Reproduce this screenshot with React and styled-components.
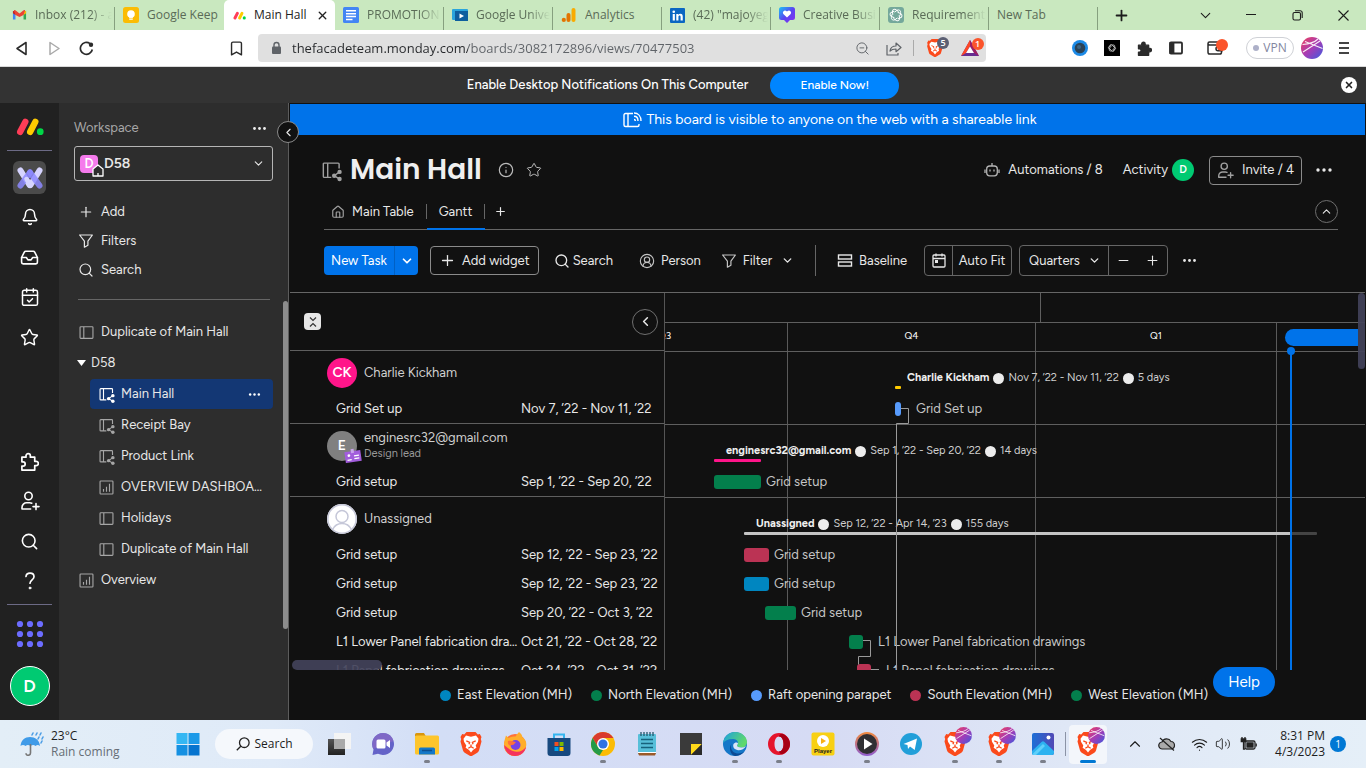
import React from "react";
import styled, { createGlobalStyle, css } from "styled-components";
import {
  Bell, Inbox, CalendarCheck, Star, Search, Plus, Minus, ChevronDown, ChevronLeft, ChevronUp,
  Info, House, CircleUserRound, Bookmark, ZoomOut, X, Wifi, Volume2,
} from "lucide-react";

const UI = `Figtree, Inter, "Liberation Sans", sans-serif`;
const SYS = `"Segoe UI", "Open Sans", "Noto Sans", sans-serif`;

const Global = createGlobalStyle`
  *, *::before, *::after { box-sizing: border-box; }
  html, body { margin: 0; height: 100%; background: #111; }
  body { font-family: ${UI}; font-size: 13px; line-height: 16px; color: #e8e8e8; }
  button, input, select { font: inherit; color: inherit; margin: 0; }
  button { background: none; border: 0; padding: 0; cursor: pointer; }
  a { color: inherit; text-decoration: none; }
  svg { display: block; flex: none; }
`;

const Screen = styled.div`
  display: flex;
  flex-direction: column;
  height: 100vh;
  overflow: hidden;
`;

/* ---------- shared ---------- */

const List = styled.ul`
  list-style: none;
  margin: 0;
  padding: 0;
`;

const IconButton = styled.button`
  display: flex;
  align-items: center;
  justify-content: center;
  flex: none;
  width: ${(p) => p.$w || 32}px;
  height: ${(p) => p.$h || p.$w || 32}px;
  color: ${(p) => p.$color || "inherit"};
`;

const RoundButton = styled(IconButton)`
  border: 1px solid #6f6f6f;
  border-radius: 50%;
`;

const Avatar = styled.span`
  position: relative;
  display: flex;
  align-items: center;
  justify-content: center;
  flex: none;
  width: ${(p) => p.$size}px;
  height: ${(p) => p.$size}px;
  border-radius: 50%;
  background: ${(p) => p.$bg};
  border: ${(p) => (p.$ring ? "1px solid #fff" : "0")};
  color: #fff;
  font-size: ${(p) => p.$font || 14}px;
  font-weight: 600;
`;

const Dots = ({ size = 18 }) => (
  <svg width={size} height={size} viewBox="0 0 18 18" fill="currentColor" aria-hidden="true">
    <circle cx="3" cy="9" r="1.7" /><circle cx="9" cy="9" r="1.7" /><circle cx="15" cy="9" r="1.7" />
  </svg>
);

const BoardIcon = ({ size = 16, shared = false }) => (
  <svg width={size} height={size} viewBox="0 0 20 20" fill="none" stroke="currentColor" strokeWidth="1.5" overflow="visible" aria-hidden="true">
    {shared ? (
      <>
        <path d="M18 8V3.2a1 1 0 0 0-1-1H2.4a1 1 0 0 0-1 1v13a1 1 0 0 0 1 1h7.4" />
        <path d="M6 2.4v14.800" />
        <g fill="currentColor" stroke="none">
          <circle cx="18.500" cy="11.500" r="2.300" /><circle cx="12.800" cy="15.500" r="2.300" /><circle cx="18.500" cy="19" r="2.300" />
        </g>
        <path d="m12.800 15.500 5.700-4M12.800 15.500l5.700 3.500" />
      </>
    ) : (
      <>
        <rect x="1.4" y="2.4" width="17.2" height="15.4" rx="1" />
        <path d="M6.4 2.6v15" />
      </>
    )}
  </svg>
);

const ChartIcon = () => (
  <svg width="15" height="15" viewBox="0 0 20 20" fill="none" stroke="currentColor" strokeWidth="1.5" aria-hidden="true">
    <rect x="1.4" y="1.4" width="17.2" height="17.2" rx="1" />
    <path d="M6 15.500V12M10 15.500V9M14 15.500V5" />
  </svg>
);

const FunnelIcon = ({ size = 16 }) => (
  <svg width={size} height={size} viewBox="0 0 20 20" fill="none" stroke="currentColor" strokeWidth="1.5" strokeLinejoin="round" aria-hidden="true">
    <path d="M2 2.500h16l-5.600 7.600v5.100L8 17.700v-7.600z" />
  </svg>
);

const PuzzleIcon = ({ size = 18, solid = false }) => (
  <svg width={size} height={size} viewBox="0 0 20 20" fill={solid ? "currentColor" : "none"} stroke="currentColor" strokeWidth="1.800" strokeLinejoin="round" aria-hidden="true">
    <path d="M2 5.500h4.300V4a2.300 2.300 0 0 1 4.600 0v1.500h4.600v4.300H17a2.300 2.300 0 0 1 0 4.600h-1.500V19H2v-4.200h1.200a2.200 2.200 0 0 0 0-4.500H2z" />
  </svg>
);

const PersonPlus = ({ size = 20 }) => (
  <svg width={size} height={size} viewBox="0 0 20 20" fill="none" stroke="currentColor" strokeWidth="1.600" strokeLinecap="round" strokeLinejoin="round" aria-hidden="true">
    <circle cx="8.500" cy="5" r="3.700" />
    <path d="M10.600 18H2v-1.600c0-2.800 2.200-4.600 4.600-4.600h3.200c.8 0 1.400.1 2 .4M16 12.600v6M13 15.600h6" />
  </svg>
);

const MondayLogo = ({ width = 28, height = 19 }) => (
  <svg width={width} height={height} viewBox="0 0 30 20" strokeWidth="6.800" strokeLinecap="round" aria-hidden="true">
    <path d="M4.500 15.700 10 5" stroke="#ff3d57" />
    <path d="M15.200 15.700 20.700 5" stroke="#ffcb00" />
    <circle cx="26" cy="15.500" r="3.600" fill="#00d647" />
  </svg>
);

/* ---------- browser chrome ---------- */

const TabStrip = styled.div`
  display: flex;
  flex: none;
  height: 30px;
  background: #c9e8bf;
  font-family: ${SYS};
  font-size: 12px;
  color: #5a6b57;
`;

const TabList = styled.nav`
  display: flex;
  min-width: 0;
`;

const BrowserTab = styled.a`
  position: relative;
  display: flex;
  align-items: center;
  gap: 8px;
  min-width: 0;
  flex: 0 1 ${(p) => p.$w || 109}px;
  width: ${(p) => p.$w || 109}px;
  padding: 0 ${(p) => (p.$active ? 6 : 3)}px 0 ${(p) => p.$pad || 8}px;
  ${(p) =>
    p.$active
      ? css`
          background: #fff;
          color: #222;
          border-radius: 5px 5px 0 0;
        `
      : css`
          &::after {
            content: "";
            position: absolute;
            right: 0;
            top: 7px;
            bottom: 0;
            width: ${p.$noLine ? 0 : 1}px;
            background: #86a07f;
          }
        `}
`;

const TabLabel = styled.span`
  flex: 1;
  min-width: 0;
  overflow: hidden;
  white-space: nowrap;
  ${(p) => p.$fade && "mask-image: linear-gradient(90deg, #000 calc(100% - 22px), transparent);"}
`;

const WindowControls = styled.div`
  display: flex;
  margin-left: auto;
  color: #1c1c1c;
`;

const AddressRow = styled.div`
  display: flex;
  align-items: center;
  flex: none;
  height: 37px;
  background: #fff;
  border-bottom: 1px solid #d9d9d9;
  color: #2b2b2b;
  font-family: ${SYS};
`;

const NavButtons = styled.div`
  display: flex;
  flex: none;
  width: 258px;
  padding: 0 6px;
  & > :last-child { margin-left: auto; }
`;

const AddressBar = styled.div`
  display: flex;
  align-items: center;
  flex: 1;
  min-width: 0;
  height: 28px;
  padding-left: 12px;
  border-radius: 4px;
  background: #e0e0e0;
  color: #5f6368;
`;

const AddressInput = styled.input`
  flex: 1;
  min-width: 0;
  height: 28px;
  margin-left: 9px;
  padding: 0;
  border: 0;
  outline: 0;
  background: linear-gradient(90deg, #26282b 176px, #5f6368 176px);
  background-clip: text;
  -webkit-text-fill-color: transparent;
`;

const BarRule = styled.span`
  width: 1px;
  height: 16px;
  margin: 0 3px;
  background: #aaa;
`;

const Extensions = styled.div`
  display: flex;
  align-items: center;
  justify-content: flex-end;
  flex: none;
  width: 380px;
  padding-right: 8px;
`;

const VpnButton = styled.button`
  display: flex;
  align-items: center;
  justify-content: center;
  gap: 4px;
  width: 48px;
  height: 22px;
  margin-left: 8px;
  border: 1px solid #cfd1d6;
  border-radius: 11px;
  font-size: 12px;
  color: #8286a0;
  &::before { content: ""; width: 6px; height: 6px; border-radius: 50%; background: #adb0c8; }
`;

const Gmail = () => (
  <svg width="15" height="16" viewBox="0 0 16 16"><path d="M1 3.500v9.300h2.700V6z" fill="#4285f4" /><path d="M15 3.500v9.300h-2.700V6z" fill="#34a853" /><path d="M1 3.600 3.700 4v4L1 6z" fill="#c5221f" /><path d="M12.300 4 15 3.600V6l-2.700 2z" fill="#fbbc04" /><path d="M2 3c1-.6 1.600 0 2 .3l4 3.100 4-3.100c.4-.3 1.200-.9 2-.3l-1.700 5L8 10.200 3.700 8z" fill="#ea4335" /></svg>
);
const Keep = () => (
  <svg width="16" height="16" viewBox="0 0 16 16"><rect width="16" height="16" rx="2.500" fill="#fbbc04" /><circle cx="8" cy="7" r="3.800" fill="#fff" /><path d="M6 9h4v1.800H6zM6.200 11.600h3.600v1.200H6.200z" fill="#fff" /></svg>
);
const Docs = () => (
  <svg width="16" height="16" viewBox="0 0 16 16"><rect width="16" height="16" rx="1.500" fill="#4285f4" /><path d="M3 3.800h10M3 6.700h10M3 9.600h10M3 12.400h6.500" stroke="#fff" strokeWidth="1.500" /></svg>
);
const Course = () => (
  <svg width="16" height="16" viewBox="0 0 16 16"><rect y="2" width="16" height="11" rx="1" fill="#2aa5dc" /><rect x="3" y="4" width="13" height="10" fill="#0e5f9e" /><path d="m7.500 6.500 4.500 2.500-4.500 2.500z" fill="#fff" /></svg>
);
const Analytics = () => (
  <svg width="16" height="16" viewBox="0 0 16 16"><rect x="10.500" y="1" width="4" height="14" rx="2" fill="#f9ab00" /><rect x="5.500" y="6" width="4" height="9" rx="2" fill="#e37400" /><circle cx="2.800" cy="12.900" r="2.100" fill="#e37400" /></svg>
);
const LinkedIn = () => (
  <svg width="15" height="15" viewBox="0 0 16 16"><rect width="16" height="16" rx="1" fill="#0a66c2" /><circle cx="4" cy="4" r="1.400" fill="#fff" /><path d="M2.900 6.400h2.300v7H2.900zM6.700 6.400h2.200v1c.5-.8 1.200-1.200 2.200-1.200 1.900 0 2.500 1.200 2.500 3v4.200h-2.300V9.700c0-.9-.2-1.600-1.100-1.600-.9 0-1.200.7-1.200 1.600v3.700H6.700z" fill="#fff" /></svg>
);
const Creative = () => (
  <svg width="16" height="16" viewBox="0 0 16 16"><defs><linearGradient id="cb" x1="0" y1="0" x2="1" y2="1"><stop offset="0" stopColor="#18c5f5" /><stop offset=".5" stopColor="#5a45f0" /><stop offset="1" stopColor="#8a2ff0" /></linearGradient></defs><path d="M2.500 0h11A2.500 2.500 0 0 1 16 2.500v8a2.500 2.500 0 0 1-2.500 2.500H11l-3 3-3-3H2.500A2.500 2.500 0 0 1 0 10.500v-8A2.500 2.500 0 0 1 2.500 0z" fill="url(#cb)" /><path d="M8 10.500 4.300 7a2.200 2.200 0 0 1 3-3.100l.7.600.7-.6a2.200 2.200 0 0 1 3 3.100z" fill="#fff" /></svg>
);
const Knot = ({ bg = "#74a89b", rx = 3, s = 1 }) => (
  <svg width="16" height="16" viewBox="0 0 16 16"><rect width="16" height="16" rx={rx} fill={bg} /><g transform={`translate(8 8) scale(${s})`} fill="none" stroke="#fff" strokeWidth="1">{[0, 60, 120, 180, 240, 300].map((a) => <path key={a} transform={`rotate(${a})`} d="M-1.500-2.800 1.200-4.800c1.800-1 3.800.4 3.400 2.400L4.200.5" />)}</g></svg>
);

const BraveLion = ({ size = 24 }) => (
  <svg width={size} height={size} viewBox="0 0 24 24">
    <path d="M7.500 0h9l2.300 2.400 2-.3L22.500 5l-.7 2 .7 2.500-2.500 9c-.3 1-.9 1.700-1.700 2.300L12 24.500l-6.300-3.700c-.8-.6-1.400-1.300-1.700-2.300l-2.500-9 .7-2.500-.7-2 1.700-2.900 2 .3z" fill="#fb4a1c" />
    <path d="M9 4l3 .7L15 4l2-.5 2.500 3.200-.5 3-2.300 3.700.7 2.300-2 1.400-1.400 1-2 2.400-2-2.400-1.400-1-2-1.400.7-2.300L5 9.700l-.5-3L7 3.500z" fill="#fff" />
    <path d="m7.300 8.800 3.300 1.500-.6 2M16.700 8.800l-3.300 1.500.6 2M12 12.500v2M9.300 16.200l2.700-1.500 2.700 1.500" stroke="#fb4a1c" strokeWidth="1.300" fill="none" />
  </svg>
);

const ProfileOrb = ({ size = 22, id }) => (
  <svg width={size} height={size} viewBox="0 0 22 22">
    <defs><linearGradient id={id} x1="0" y1="0" x2="1" y2="1"><stop offset="0" stopColor="#f0405a" /><stop offset=".5" stopColor="#a73bb5" /><stop offset="1" stopColor="#3b5be0" /></linearGradient></defs>
    <circle cx="11" cy="11" r="11" fill={`url(#${id})`} />
    <path d="M2 15 19 4M4 4.500 21.500 11.500M1.500 7.500C8 7 14 5 17 2" stroke="#fff" strokeWidth="1.100" fill="none" opacity=".9" />
  </svg>
);

const BadgeHolder = styled.span`
  position: relative;
  display: flex;
`;

const Badge = styled.span`
  position: absolute;
  top: -2px;
  right: -5px;
  width: 12px;
  height: 12px;
  border-radius: 50%;
  background: ${(p) => p.$bg};
  color: #fff;
  font-size: 9px;
  font-weight: 600;
  line-height: 12px;
  text-align: center;
`;

const tabs = [
  { label: "Inbox (212) - a", icon: <Gmail />, w: 115, pad: 12, fade: true },
  { label: "Google Keep", icon: <Keep />, noLine: true },
  { label: "Main Hall", icon: <MondayLogo width={13} height={9} />, w: 111, pad: 9, active: true },
  { label: "PROMOTION", icon: <Docs />, fade: true },
  { label: "Google Univer", icon: <Course />, fade: true },
  { label: "Analytics", icon: <Analytics /> },
  { label: '(42) "majoyeg', icon: <LinkedIn />, fade: true },
  { label: "Creative Busin", icon: <Creative />, fade: true },
  { label: "Requirements", icon: <Knot />, fade: true },
  { label: "New Tab" },
];

function BrowserChrome() {
  return (
    <>
      <TabStrip>
        <TabList aria-label="Browser tabs">
          {tabs.map((t) => (
            <BrowserTab key={t.label} href="#" $w={t.w} $pad={t.pad} $active={t.active} $noLine={t.noLine}>
              {t.icon}
              <TabLabel $fade={t.fade}>{t.label}</TabLabel>
              {t.active && <X size={13} strokeWidth={2.5} />}
            </BrowserTab>
          ))}
        </TabList>
        <IconButton $w={46} $h={30} $color="#1c1c1c" aria-label="New tab"><Plus size={17} strokeWidth={2.5} /></IconButton>
        <WindowControls>
          <IconButton $w={46} $h={30} aria-label="Tab search"><ChevronDown size={17} strokeWidth={1.5} /></IconButton>
          <IconButton $w={46} $h={30} aria-label="Minimise"><svg width="10" height="10"><path d="M0 4.500h10" stroke="currentColor" /></svg></IconButton>
          <IconButton $w={46} $h={30} aria-label="Restore"><svg width="11" height="11" fill="none" stroke="currentColor" strokeWidth="1.100"><rect x="1" y="2.500" width="7.500" height="7.500" rx="1.500" /><path d="M3 .800h5.200a2 2 0 0 1 2 2V8" /></svg></IconButton>
          <IconButton $w={46} $h={30} aria-label="Close"><svg width="11" height="11"><path d="m.5.5 10 10m0-10-10 10" stroke="currentColor" strokeWidth="1.100" /></svg></IconButton>
        </WindowControls>
      </TabStrip>
      <AddressRow>
        <NavButtons>
          <IconButton aria-label="Back"><svg width="14" height="15" viewBox="0 0 14 15" fill="none" stroke="currentColor" strokeWidth="1.600" strokeLinejoin="round"><path d="M11 1.500v12L2 7.500z" /></svg></IconButton>
          <IconButton $color="#aaa" aria-label="Forward"><svg width="14" height="15" viewBox="0 0 14 15" fill="none" stroke="currentColor" strokeWidth="1.500" strokeLinejoin="round"><path d="M3 1.500v12l9-6z" /></svg></IconButton>
          <IconButton aria-label="Reload"><svg width="15" height="15" viewBox="0 0 15 15" fill="none" stroke="currentColor" strokeWidth="1.700"><path d="M13.300 8.500A6 6 0 1 1 11 2.600" /><circle cx="12" cy="3.800" r="2.200" fill="currentColor" stroke="none" /></svg></IconButton>
          <IconButton aria-label="Bookmark"><Bookmark size={17} strokeWidth={2} /></IconButton>
        </NavButtons>
        <AddressBar>
          <svg width="13" height="14" viewBox="0 0 13 14" aria-hidden="true"><rect x="2" y="5.500" width="9" height="7.500" rx="1" fill="#5f6368" /><path d="M4 6V4a2.500 2.500 0 0 1 5 0v2" fill="none" stroke="#5f6368" strokeWidth="1.400" /></svg>
          <AddressInput aria-label="Address" readOnly value="thefacadeteam.monday.com/boards/3082172896/views/70477503" />
          <IconButton aria-label="Zoom"><ZoomOut size={15} strokeWidth={1.5} /></IconButton>
          <IconButton aria-label="Share"><svg width="16" height="15" viewBox="0 0 16 15" fill="none" stroke="currentColor" strokeWidth="1.200" strokeLinejoin="round"><path d="M1 4v10h11v-2M4 10c.5-3.500 2.800-5 6-5V2l5 4.500-5 4.200V8c-3 0-4.500.5-6 2z" /></svg></IconButton>
          <BarRule />
          <IconButton $w={36} $h={28} aria-label="Shields"><BadgeHolder><BraveLion size={18} /><Badge $bg="#5b5f73">5</Badge></BadgeHolder></IconButton>
          <IconButton $w={33} $h={28} aria-label="Rewards"><BadgeHolder><svg width="18" height="16" viewBox="0 0 18 16"><path d="M9 0 0 16h18z" fill="#662d91" /><path d="M9 0 0 16l5-3 4-7z" fill="#ff4724" /><path d="M9 0v6l4 7 5 3z" fill="#9e1f63" /><path d="m9 6.500 4 6.500H5z" fill="#fff" /></svg><Badge $bg="#fb542b">1</Badge></BadgeHolder></IconButton>
        </AddressBar>
        <Extensions>
          <IconButton aria-label="Lens"><svg width="16" height="16" viewBox="0 0 16 16"><circle cx="8" cy="8" r="8" fill="#1c8ae6" /><circle cx="8" cy="8" r="5.300" fill="#2a4256" /><circle cx="7" cy="7" r="2" fill="#3d6481" /></svg></IconButton>
          <IconButton aria-label="Assistant"><Knot bg="#000" rx={0} s={0.6} /></IconButton>
          <IconButton aria-label="Extensions"><PuzzleIcon size={15} solid /></IconButton>
          <IconButton aria-label="Side panel"><svg width="14" height="14" viewBox="0 0 14 14" fill="none" stroke="currentColor" strokeWidth="1.800"><rect x="1" y="1.500" width="12" height="11" rx="1" /><path d="M1.500 2v10h3V2z" fill="currentColor" /></svg></IconButton>
          <IconButton $w={46} $h={28} aria-label="Wallet"><BadgeHolder><svg width="16" height="14" viewBox="0 0 16 14" fill="none" stroke="currentColor" strokeWidth="1.500"><path d="M14.500 5V4H2.500C.5 4 .5 1 2.500 1H12M1 2.500v8.700c0 1 .8 1.800 1.800 1.800h10c1 0 1.700-.8 1.700-1.800V10M15 5.800h-4a2 2 0 0 0 0 4h4z" /></svg><Badge $bg="#fb542b" /></BadgeHolder></IconButton>
          <VpnButton>VPN</VpnButton>
          <IconButton $w={36} $h={28} aria-label="Profile"><ProfileOrb id="orbMain" /></IconButton>
          <IconButton $w={28} $h={28} aria-label="Menu"><svg width="10" height="12"><path d="M0 1h10M0 6h10M0 11h10" stroke="#444" strokeWidth="1.800" /></svg></IconButton>
        </Extensions>
      </AddressRow>
    </>
  );
}

/* ---------- notice ---------- */

const Notice = styled.div`
  position: relative;
  display: flex;
  align-items: center;
  justify-content: center;
  gap: 22px;
  flex: none;
  height: 36px;
  background: #333;
  color: #fff;
  font-weight: 500;
`;

const NoticeButton = styled.button`
  width: 129px;
  height: 27px;
  border-radius: 14px;
  background: #0085ff;
  font-size: 12px;
`;

const NoticeClose = styled(IconButton)`
  position: absolute;
  right: 9px;
  border-radius: 50%;
  background: #fff;
`;

/* ---------- rail ---------- */

const Workspace = styled.div`
  display: flex;
  flex: 1;
  min-height: 0;
  background: #111;
`;

const Rail = styled.nav`
  display: flex;
  flex-direction: column;
  align-items: center;
  flex: none;
  width: 59px;
  padding: 14px 0 14px;
  background: #212121;
  color: #fff;
`;

const RailRule = styled.hr`
  width: 45px;
  height: 1px;
  margin: ${(p) => p.$m};
  border: 0;
  background: #6c6a85;
`;

const RailBottom = styled.div`
  display: flex;
  flex-direction: column;
  align-items: center;
  margin-top: auto;
`;

const ProductButton = styled.button`
  display: grid;
  place-items: center;
  width: 33px;
  height: 33px;
  margin-bottom: 3px;
  border-radius: 6px;
  background: #4b4b4b;
`;

const RailAvatar = styled(Avatar)`
  margin-top: 18px;
`;

function AppRail() {
  return (
    <Rail aria-label="Main">
      <a href="#" aria-label="Home"><MondayLogo /></a>
      <RailRule $m="14px 0 10px" />
      <ProductButton aria-label="Work management">
        <svg width="28" height="24" viewBox="0 0 28 24" strokeLinecap="round" strokeWidth="6" fill="none">
          <path d="M4.500 4.500 13.500 19" stroke="#d6d4ff" />
          <path d="M23.500 4.500 14.500 19" stroke="#d6d4ff" />
          <path d="M14 6.500 4.500 19.500" stroke="#8d8aff" opacity=".85" />
          <path d="M14 6.500 23.500 19.500" stroke="#8d8aff" opacity=".85" />
          <path d="M10.500 13 14 19" stroke="#d6d4ff" strokeWidth="4.500" />
        </svg>
      </ProductButton>
      <IconButton $w={40} aria-label="Notifications"><Bell size={18} strokeWidth={2} /></IconButton>
      <IconButton $w={40} aria-label="Inbox"><Inbox size={19} strokeWidth={2} /></IconButton>
      <IconButton $w={40} aria-label="My work"><CalendarCheck size={20} strokeWidth={1.8} /></IconButton>
      <IconButton $w={40} aria-label="Favorites"><Star size={19} strokeWidth={1.8} /></IconButton>
      <RailBottom>
        <IconButton $w={40} aria-label="Apps"><PuzzleIcon size={19} /></IconButton>
        <IconButton $w={40} aria-label="Invite members"><PersonPlus size={20} /></IconButton>
        <IconButton $w={40} aria-label="Search everything"><Search size={19} strokeWidth={2} /></IconButton>
        <IconButton $w={40} aria-label="Help"><svg width="12" height="18" viewBox="0 0 12 18" fill="none" stroke="currentColor" strokeWidth="1.700" strokeLinecap="round"><path d="M2 4.500C2.200 2.400 3.800 1.200 6 1.200s4 1.400 4 3.500c0 3-4 3.200-4 6.500" /><circle cx="6" cy="16" r="1" fill="currentColor" strokeWidth=".8" /></svg></IconButton>
        <RailRule $m="3px 0 15px" />
        <IconButton $w={28} aria-label="Products">
          <svg width="28" height="28" viewBox="0 0 28 28" fill="#6c6cff">
            {[4, 14, 24].map((y) => [4, 14, 24].map((x) => <circle key={`${x}${y}`} cx={x} cy={y} r="3.100" />))}
          </svg>
        </IconButton>
        <RailAvatar as="button" $size={40} $bg="#00ca72" $ring $font={18} aria-label="Account">D</RailAvatar>
      </RailBottom>
    </Rail>
  );
}

/* ---------- sidebar ---------- */

const Sidebar = styled.aside`
  position: relative;
  flex: none;
  width: 230px;
  padding: 12px 15px 0;
  background: #2d2d2d;
  border-right: 1px solid #5c5c5c;
`;

const SideHead = styled.div`
  display: flex;
  align-items: center;
  justify-content: space-between;
  height: 26px;
  color: #a8a8a8;
`;

const Picker = styled.label`
  position: relative;
  display: flex;
  align-items: center;
  height: 35px;
  margin: 5px 0 16px;
  border: 1px solid #b5b5b5;
  border-radius: 3px;
`;

const PickerSelect = styled.select`
  width: 100%;
  height: 100%;
  padding: 0 28px 0 ${(p) => p.$pad}px;
  border: 0;
  outline: 0;
  appearance: none;
  background: transparent;
  font-size: ${(p) => p.$font || 13}px;
  font-weight: ${(p) => p.$weight || 400};
`;

const PickerIcon = styled.span`
  position: absolute;
  left: 5px;
  display: grid;
  place-items: center;
  width: 18px;
  height: 18px;
  border-radius: 4px;
  background: #f57bec;
  color: #fff;
  font-weight: 600;
  svg { position: absolute; left: 12px; top: 9px; }
`;

const PickerArrow = styled.span`
  position: absolute;
  right: 7px;
  pointer-events: none;
`;

const SideAction = styled.button`
  display: flex;
  align-items: center;
  gap: 7px;
  width: 100%;
  height: 29px;
  padding-left: 4px;
`;

const SideRule = styled.hr`
  height: 1px;
  margin: 15px 3px 17px 4px;
  border: 0;
  background: #666;
`;

const SideItem = styled.a`
  display: flex;
  align-items: center;
  gap: 7px;
  height: 30px;
  margin-bottom: 1px;
  margin-left: ${(p) => (p.$nested ? 16 : 0)}px;
  padding: 0 ${(p) => (p.$active ? 12 : 4)}px 0 ${(p) => (p.$nested ? 9 : 5)}px;
  border-radius: 4px;
  background: ${(p) => (p.$active ? "#133774" : "transparent")};
  svg { color: ${(p) => (p.$active ? "#fff" : "#a6a6a6")}; }
`;

const Ellipsis = styled.span`
  flex: 1;
  min-width: 0;
  overflow: hidden;
  white-space: nowrap;
  text-overflow: ellipsis;
`;

const SideScroll = styled.span`
  position: absolute;
  right: 0;
  top: 198px;
  width: 5px;
  height: 328px;
  border-radius: 3px;
  background: #8c8c8c;
`;

const CollapseSide = styled(RoundButton)`
  position: absolute;
  right: -11px;
  top: 18px;
  z-index: 2;
  border-color: #8a8a8a;
  background: #111;
`;

const sideItems = [
  { label: "Duplicate of Main Hall", icon: <BoardIcon size={15} /> },
  { label: "D58", folder: true },
  { label: "Main Hall", icon: <BoardIcon size={15} shared />, nested: true, active: true },
  { label: "Receipt Bay", icon: <BoardIcon size={15} shared />, nested: true },
  { label: "Product Link", icon: <BoardIcon size={15} shared />, nested: true },
  { label: "OVERVIEW DASHBOARD", icon: <ChartIcon />, nested: true },
  { label: "Holidays", icon: <BoardIcon size={15} />, nested: true },
  { label: "Duplicate of Main Hall", icon: <BoardIcon size={15} />, nested: true },
  { label: "Overview", icon: <ChartIcon /> },
];

function BoardSidebar() {
  return (
    <Sidebar>
      <SideHead>
        Workspace
        <IconButton $w={28} $color="#eee" aria-label="Workspace options"><Dots size={15} /></IconButton>
      </SideHead>
      <Picker>
        <PickerIcon>
          D
          <svg width="12" height="13" viewBox="0 0 12 13" fill="#2d2d2d" stroke="#fff" strokeWidth="1.300" strokeLinejoin="round"><path d="M1 5 6 1l5 4v7H1z" /><path d="M6 9v3" /></svg>
        </PickerIcon>
        <PickerSelect aria-label="Workspace" $pad={29} $font={14} $weight={600}><option>D58</option></PickerSelect>
        <PickerArrow><ChevronDown size={13} strokeWidth={2} /></PickerArrow>
      </Picker>
      <SideAction><Plus size={16} strokeWidth={1.8} />Add</SideAction>
      <SideAction><FunnelIcon />Filters</SideAction>
      <SideAction><Search size={16} strokeWidth={1.8} />Search</SideAction>
      <SideRule />
      <List>
        {sideItems.map((it, i) => (
          <li key={i}>
            <SideItem href="#" $nested={it.nested} $active={it.active}>
              {it.folder ? <svg width="5" height="6" viewBox="0 0 5 6" overflow="visible"><path d="M-2 0h9L2.500 6z" fill="#fff" /></svg> : it.icon}
              <Ellipsis>{it.label}</Ellipsis>
              {it.active && <Dots size={13} />}
            </SideItem>
          </li>
        ))}
      </List>
      <SideScroll />
      <CollapseSide $w={22} aria-label="Collapse sidebar"><ChevronLeft size={13} /></CollapseSide>
    </Sidebar>
  );
}

/* ---------- board ---------- */

const Main = styled.main`
  position: relative;
  display: flex;
  flex-direction: column;
  flex: 1;
  min-width: 0;
  padding: 1px 1px 0;
`;

const ShareBanner = styled.div`
  display: flex;
  align-items: center;
  justify-content: center;
  gap: 5px;
  flex: none;
  height: 31px;
  padding-left: 4px;
  background: #0073ea;
  color: #fff;
  font-size: 14px;
`;

const BoardHead = styled.header`
  display: flex;
  align-items: center;
  flex: none;
  height: 62px;
  padding: 8px 27px 0 32px;
`;

const BoardTitle = styled.h1`
  margin: 0 13px 0 9px;
  font-family: Poppins, ${UI};
  font-size: 28px;
  line-height: 40px;
  font-weight: 600;
  color: #efefef;
`;

const HeadTools = styled.div`
  display: flex;
  align-items: center;
  margin-left: auto;
`;

const HeadButton = styled.button`
  display: flex;
  align-items: center;
  gap: ${(p) => p.$gap || 8}px;
  margin-right: ${(p) => p.$mr || 0}px;
  white-space: nowrap;
`;

const InviteButton = styled(HeadButton)`
  height: 29px;
  padding: 0 7px;
  border: 1px solid #8b8b8b;
  border-radius: 4px;
`;

const Muted = styled.span`
  display: flex;
  color: ${(p) => p.$color || "#a0a0a0"};
`;

const ViewTabs = styled.nav`
  display: flex;
  align-items: flex-start;
  flex: none;
  height: 33px;
  margin: 0 27px 0 34px;
  border-bottom: 1px solid #666;
`;

const ViewTab = styled.a`
  position: relative;
  display: flex;
  align-items: center;
  gap: 7px;
  height: 33px;
  padding: 0 13px 4px ${(p) => (p.$active ? 12 : 7)}px;
  &::before {
    content: "";
    position: absolute;
    right: 0;
    top: 7px;
    width: 1px;
    height: 15px;
    background: #666;
  }
  &::after {
    content: "";
    position: absolute;
    left: 0;
    right: 0;
    bottom: 0;
    height: 2px;
    background: ${(p) => (p.$active ? "#0073ea" : "transparent")};
  }
`;

const CollapseHead = styled(RoundButton)`
  margin: 3px 0 0 auto;
`;

const Tools = styled.div`
  display: flex;
  align-items: center;
  flex: none;
  height: 62px;
  padding: 0 34px 1px;
`;

const Split = styled.div`
  display: flex;
  height: 29px;
  border-radius: 4px;
  overflow: hidden;
  background: #0073ea;
  color: #fff;
`;

const SplitMain = styled.button`
  width: 70px;
`;

const SplitArrow = styled(IconButton)`
  border-left: 1px solid #0060c4;
`;

const ToolButton = styled.button`
  display: flex;
  align-items: center;
  gap: ${(p) => p.$gap || 6}px;
  margin-left: ${(p) => p.$ml || 0}px;
  white-space: nowrap;
`;

const OutlineTool = styled(ToolButton)`
  height: 29px;
  padding: 0 8px;
  border: 1px solid #8b8b8b;
  border-radius: 4px;
`;

const ToolRule = styled.span`
  width: 1px;
  height: 31px;
  margin: 0 21px 0 13px;
  background: #666;
`;

const Group = styled.div`
  display: flex;
  align-items: center;
  height: 31px;
  margin-left: ${(p) => p.$ml}px;
  border: 1px solid #666;
  border-radius: 4px;
`;

const GroupCell = styled.button`
  display: flex;
  align-items: center;
  justify-content: center;
  width: ${(p) => p.$w}px;
  height: 29px;
  border-left: ${(p) => (p.$line ? "1px solid #666" : "0")};
`;

const ScalePicker = styled.label`
  position: relative;
  display: flex;
  align-items: center;
  width: 88px;
  height: 29px;
`;

/* ---------- gantt ---------- */

const Gantt = styled.section`
  position: relative;
  display: flex;
  flex: 1;
  min-height: 0;
  overflow: hidden;
  border-top: 1px solid #666;
`;

const LINE = "#5f5f5f";

const TaskPanel = styled.div`
  flex: none;
  width: 375px;
  border-right: 1px solid #555;
`;

const PanelHead = styled.div`
  display: flex;
  align-items: center;
  justify-content: space-between;
  height: 58px;
  padding: 0 6px 0 14px;
  border-bottom: 1px solid ${LINE};
`;

const CollapseAll = styled(IconButton)`
  border-radius: 4px;
  background: #e6e6e6;
`;

const Section = styled.div`
  border-bottom: 1px solid ${LINE};
`;

const Owner = styled.div`
  display: flex;
  align-items: center;
  gap: 7px;
  height: 43px;
  padding-left: 37px;
`;

const OwnerText = styled.div`
  display: flex;
  flex-direction: column;
  color: #cfcfcf;
`;

const OwnerRole = styled.span`
  font-size: 11px;
  line-height: 16px;
  color: #999;
`;

const OwnerTag = styled.svg`
  position: absolute;
  left: 17px;
  top: 17px;
`;

const TaskRow = styled.div`
  display: flex;
  align-items: center;
  height: 29px;
  padding-left: 46px;
`;

const TaskName = styled.span`
  flex: none;
  width: 182px;
  margin-right: 3px;
  overflow: hidden;
  white-space: nowrap;
  text-overflow: ellipsis;
`;

const TaskDates = styled.span`
  white-space: nowrap;
`;

const Timeline = styled.div`
  position: relative;
  flex: 1;
  min-width: 0;
  overflow: hidden;
`;

const YearRow = styled.div`
  height: 30px;
  border-bottom: 1px solid ${LINE};
  &::before {
    content: "";
    display: block;
    width: 376px;
    height: 29px;
    border-right: 1px solid ${LINE};
  }
`;

const QuarterRow = styled.div`
  display: flex;
  height: 29px;
  border-bottom: 1px solid ${LINE};
`;

const Quarter = styled.div`
  display: flex;
  align-items: center;
  justify-content: center;
  flex: none;
  width: ${(p) => p.$w}px;
  padding-bottom: 3px;
  font-size: 10px;
  color: #fff;
  border-right: 1px solid #5a5a5a;
  &:first-child { margin-left: -123px; }
`;

const NowQuarter = styled.div`
  flex: 1;
  height: 17px;
  margin: 6px 7px 0 8px;
  border-radius: 9px 0 0 9px;
  background: #0073ea;
`;

const GridLayer = styled.div`
  position: absolute;
  inset: 59px 0 0;
  display: flex;
  pointer-events: none;
`;

const Canvas = styled.div`
  position: relative;
`;

const Summary = styled.div`
  display: flex;
  flex-direction: column;
  justify-content: flex-end;
  height: 43px;
  padding-bottom: 6px;
`;

const SummaryLabel = styled.div`
  display: flex;
  align-items: center;
  gap: 4px;
  white-space: nowrap;
  font-size: 11px;
  color: #cfcfcf;
  b { font-weight: 700; color: #efefef; }
`;

const SummaryDot = styled.span`
  width: 11px;
  height: 11px;
  border-radius: 50%;
  background: #ececec;
`;

const SummaryBar = styled.span`
  height: 3px;
  border-radius: 1px;
  background: ${(p) => p.$bg};
`;

const BarRow = styled.div`
  display: flex;
  align-items: center;
  height: 29px;
  padding-bottom: 1px;
  white-space: nowrap;
  color: #c6c6c6;
`;

const Bar = styled.span`
  flex: none;
  height: 14px;
  margin-right: ${(p) => (p.$linked ? 15 : 5)}px;
  border-radius: 3px;
  background: ${(p) => p.$bg};
`;

const Links = styled.svg`
  position: absolute;
  left: 0;
  top: 0;
  pointer-events: none;
`;

const TodayLine = styled.span`
  position: absolute;
  left: 625px;
  top: 58px;
  bottom: 0;
  width: 2px;
  background: #0073ea;
  &::before {
    content: "";
    position: absolute;
    left: -3px;
    top: -4px;
    width: 8px;
    height: 8px;
    border-radius: 50%;
    background: #0073ea;
  }
`;

const Thumb = styled.span`
  position: absolute;
  border-radius: 5px;
  background: #42425a;
  opacity: 0.92;
  ${(p) => (p.$vertical ? "right: 0; top: 0; width: 7px; height: 76px;" : "left: 2px; bottom: 0; width: 90px; height: 10px;")}
`;

const Legend = styled(List)`
  display: flex;
  align-items: center;
  justify-content: center;
  gap: 19px;
  flex: none;
  height: 50px;
  padding-right: 7px;
`;

const LegendItem = styled.li`
  display: flex;
  align-items: center;
  gap: 6px;
  white-space: nowrap;
  &::before {
    content: "";
    width: 11px;
    height: 11px;
    border-radius: 50%;
    background: ${(p) => p.$bg};
  }
`;

const HelpButton = styled.button`
  position: absolute;
  right: 91px;
  bottom: 23px;
  width: 62px;
  height: 30px;
  border-radius: 15px;
  background: #0073ea;
  color: #fff;
  font-size: 15px;
`;

const groups = [
  {
    name: "Charlie Kickham", initials: "CK", bg: "#ff158a",
    range: "Nov 7, ’22 - Nov 11, ’22", days: "5 days", labelX: 242, barX: 230, barW: 6, color: "#ffcb00",
    tasks: [{ name: "Grid Set up", dates: "Nov 7, ’22 - Nov 11, ’22", x: 230, w: 6, color: "#579bfc", linked: true }],
  },
  {
    name: "enginesrc32@gmail.com", initials: "E", bg: "#808080", role: "Design lead",
    range: "Sep 1, ’22 - Sep 20, ’22", days: "14 days", labelX: 61, barX: 49, barW: 47, color: "#ff158a",
    tasks: [{ name: "Grid setup", dates: "Sep 1, ’22 - Sep 20, ’22", x: 49, w: 47, color: "#037f4c" }],
  },
  {
    name: "Unassigned", bg: "#fff",
    range: "Sep 12, ’22 - Apr 14, ’23", days: "155 days", labelX: 91, barX: 79, barW: 573,
    color: "linear-gradient(90deg, #c4c4c4 546px, #444 546px)",
    tasks: [
      { name: "Grid setup", dates: "Sep 12, ’22 - Sep 23, ’22", x: 79, w: 25, color: "#bb3354" },
      { name: "Grid setup", dates: "Sep 12, ’22 - Sep 23, ’22", x: 79, w: 25, color: "#0086c0" },
      { name: "Grid setup", dates: "Sep 20, ’22 - Oct 3, ’22", x: 100, w: 31, color: "#037f4c" },
      { name: "L1 Lower Panel fabrication drawings", dates: "Oct 21, ’22 - Oct 28, ’22", x: 184, w: 14, color: "#037f4c", linked: true },
      { name: "L1 Panel fabrication drawings", dates: "Oct 24, ’22 - Oct 31, ’22", x: 192, w: 14, color: "#bb3354", linked: true },
    ],
  },
];

const quarters = [["Q3", 246], ["Q4", 248], ["Q1", 241]];

const legend = [
  ["East Elevation (MH)", "#0086c0"],
  ["North Elevation (MH)", "#037f4c"],
  ["Raft opening parapet", "#579bfc"],
  ["South Elevation (MH)", "#bb3354"],
  ["West Elevation (MH)", "#037f4c"],
];

function GanttChart() {
  return (
    <Gantt>
      <TaskPanel>
        <PanelHead>
          <CollapseAll $w={17} aria-label="Collapse all groups"><svg width="10" height="12" viewBox="0 0 10 12" fill="none" stroke="#333" strokeWidth="1.200"><path d="m2 1.500 3 3 3-3M2 10.500l3-3 3 3" /></svg></CollapseAll>
          <RoundButton $w={26} aria-label="Hide task list"><ChevronLeft size={15} strokeWidth={2.5} /></RoundButton>
        </PanelHead>
        {groups.map((g) => (
          <Section key={g.name}>
            <Owner>
              <Avatar $size={30} $bg={g.bg} $font={14}>
                {g.initials || (
                  <svg width="30" height="30" viewBox="0 0 30 30" fill="none" stroke="#c5c7d8" strokeWidth="1.500"><circle cx="15" cy="15" r="14.200" /><circle cx="15" cy="12.500" r="6" /><path d="M5.500 25.500c2-4 5.500-6 9.500-6s7.500 2 9.500 6" /></svg>
                )}
                {g.role && (
                  <OwnerTag width="18" height="15" viewBox="0 0 18 15"><g transform="rotate(-8 9 8)"><rect x="1" y="3" width="16" height="11" fill="#a25ddc" /><rect x="7.500" y="1" width="3" height="4" fill="#c9a3ec" /><circle cx="5" cy="7" r="1.400" fill="#fff" /><path d="M3 11.500h4.200M10 8h5M10 10.800h5" stroke="#fff" strokeWidth="1.300" /></g></OwnerTag>
                )}
              </Avatar>
              <OwnerText>{g.name}{g.role && <OwnerRole>{g.role}</OwnerRole>}</OwnerText>
            </Owner>
            {g.tasks.map((t, i) => (
              <TaskRow key={i}><TaskName>{t.name}</TaskName><TaskDates>{t.dates}</TaskDates></TaskRow>
            ))}
          </Section>
        ))}
      </TaskPanel>
      <Timeline>
        <YearRow />
        <QuarterRow>
          {quarters.map(([q, w]) => <Quarter key={q} $w={w}>{q}</Quarter>)}
          <NowQuarter />
        </QuarterRow>
        <GridLayer>{quarters.map(([q, w]) => <Quarter key={q} $w={w} />)}</GridLayer>
        <Canvas>
          <Links width="300" height="400" fill="none" stroke="#9a9a9a">
            <path d="M236 56.500h7.500v15h-12V400M198 288.500h7.500v16h-12v8M206 317.500h8" />
          </Links>
          {groups.map((g) => (
            <Section key={g.name}>
              <Summary>
                <SummaryLabel style={{ marginLeft: g.labelX }}>
                  <b>{g.name}</b><SummaryDot />{g.range}<SummaryDot />{g.days}
                </SummaryLabel>
                <SummaryBar $bg={g.color} style={{ marginLeft: g.barX, width: g.barW }} />
              </Summary>
              {g.tasks.map((t, i) => (
                <BarRow key={i}><Bar $bg={t.color} $linked={t.linked} style={{ marginLeft: t.x, width: t.w }} />{t.name}</BarRow>
              ))}
            </Section>
          ))}
        </Canvas>
        <TodayLine />
      </Timeline>
      <Thumb $vertical />
      <Thumb />
    </Gantt>
  );
}

function Board() {
  return (
    <Main>
      <ShareBanner>
        <svg width="19" height="16" viewBox="0 0 19 16" fill="none" stroke="currentColor" strokeWidth="1.400"><path d="M10 1.500H2.500a1.500 1.500 0 0 0-1.500 1.500v10a1.500 1.500 0 0 0 1.500 1.500h12a1.500 1.500 0 0 0 1.500-1.500v-1M5 1.500v13M11 1c4 0 7 3 7 8M11 4.300c2.300 0 4 1.700 4 4.700M11 7.500c.8 0 1.400.6 1.400 1.600" /></svg>
        This board is visible to anyone on the web with a shareable link
      </ShareBanner>
      <BoardHead>
        <Muted><BoardIcon size={19} shared /></Muted>
        <BoardTitle>Main Hall</BoardTitle>
        <IconButton $w={22} $color="#bbb" aria-label="Board info"><Info size={16} strokeWidth={1.8} /></IconButton>
        <IconButton $w={34} $h={22} $color="#bbb" aria-label="Favorite"><Star size={16} strokeWidth={1.5} /></IconButton>
        <HeadTools>
          <HeadButton $mr={20}>
            <svg width="16" height="14" viewBox="0 0 16 14" fill="none" stroke="#b5b5b5" strokeWidth="1.300"><path d="M8 0v3M1 6.500v3.500M15 6.500v3.500" /><rect x="2.700" y="3" width="10.600" height="9.800" rx="3" /><path d="M6 6.500v2M10 6.500v2" /></svg>
            Automations / 8
          </HeadButton>
          <HeadButton $gap={4} $mr={15}>Activity<Avatar $size={22} $bg="#00ca72" $font={11}>D</Avatar></HeadButton>
          <InviteButton $mr={8}><Muted><PersonPlus size={17} /></Muted>Invite / 4</InviteButton>
          <IconButton $w={28} aria-label="Board options"><Dots size={18} /></IconButton>
        </HeadTools>
      </BoardHead>
      <ViewTabs>
        <ViewTab href="#"><Muted><House size={14} strokeWidth={2} /></Muted>Main Table</ViewTab>
        <ViewTab href="#" $active>Gantt</ViewTab>
        <IconButton $w={30} $h={28} aria-label="Add view"><Plus size={13} strokeWidth={2.2} /></IconButton>
        <CollapseHead $w={23} aria-label="Collapse header"><ChevronUp size={13} /></CollapseHead>
      </ViewTabs>
      <Tools>
        <Split>
          <SplitMain>New Task</SplitMain>
          <SplitArrow $w={24} $h={29} aria-label="More item types"><ChevronDown size={14} strokeWidth={3} /></SplitArrow>
        </Split>
        <OutlineTool $ml={12}><Plus size={17} strokeWidth={1.8} />Add widget</OutlineTool>
        <ToolButton $ml={15} $gap={3}><Search size={16} strokeWidth={2} />Search</ToolButton>
        <ToolButton $ml={26}><Muted $color="#c4c4c4"><CircleUserRound size={16} strokeWidth={1.7} /></Muted>Person</ToolButton>
        <ToolButton $ml={20}><Muted $color="#c4c4c4"><FunnelIcon /></Muted>Filter</ToolButton>
        <IconButton $w={30} aria-label="Filter options"><ChevronDown size={13} strokeWidth={2.5} /></IconButton>
        <ToolRule />
        <ToolButton>
          <svg width="16" height="13" viewBox="0 0 16 13" fill="none" stroke="currentColor" strokeWidth="1.400"><rect x="1.500" y="1" width="13" height="4" /><rect x="1.500" y="8" width="13" height="4" /></svg>
          Baseline
        </ToolButton>
        <Group $ml={17}>
          <GroupCell $w={27} aria-label="Today"><svg width="14" height="15" viewBox="0 0 14 15" fill="none" stroke="currentColor" strokeWidth="1.300"><rect x="1" y="2" width="12" height="12" rx="1" /><path d="M1 5.500h12M4 .5v3M10 .5v3" /><rect x="3" y="7" width="3" height="3" fill="currentColor" stroke="none" /></svg></GroupCell>
          <GroupCell $w={59} $line>Auto Fit</GroupCell>
        </Group>
        <Group $ml={7}>
          <ScalePicker>
            <PickerSelect aria-label="Time scale" $pad={9}><option>Quarters</option></PickerSelect>
            <PickerArrow><ChevronDown size={13} strokeWidth={2.5} /></PickerArrow>
          </ScalePicker>
          <GroupCell $w={30} $line aria-label="Zoom out"><Minus size={15} strokeWidth={1.8} /></GroupCell>
          <GroupCell $w={29} aria-label="Zoom in"><Plus size={15} strokeWidth={1.8} /></GroupCell>
        </Group>
        <IconButton $w={42} $h={30} aria-label="More"><Dots size={15} /></IconButton>
      </Tools>
      <GanttChart />
      <Legend>{legend.map(([n, c]) => <LegendItem key={n} $bg={c}>{n}</LegendItem>)}</Legend>
      <HelpButton>Help</HelpButton>
    </Main>
  );
}

/* ---------- taskbar ---------- */

const Bottom = styled.footer`
  display: flex;
  align-items: center;
  flex: none;
  height: 48px;
  background: linear-gradient(90deg, #e3eef7 0, #dfeaf8 20%, #d3def6 32%, #d6dbf4 60%, #dfe7f6 78%, #e5eff8 100%);
  color: #1d1d1d;
  font-family: ${SYS};
  font-size: 12px;
`;

const Weather = styled.button`
  display: flex;
  align-items: center;
  gap: 7px;
  width: 166px;
  padding-left: 20px;
  text-align: left;
  color: #666d75;
  b { display: block; font-weight: 400; color: #1d1d1d; }
`;

const Slot = styled.button`
  position: relative;
  display: grid;
  place-items: center;
  flex: none;
  width: 44px;
  height: 48px;
  ${(p) =>
    p.$run &&
    css`
      &::after {
        content: "";
        position: absolute;
        left: calc(50% - ${p.$active ? 8 : 3}px);
        bottom: 5px;
        width: ${p.$active ? 16 : 6}px;
        height: 3px;
        border-radius: 2px;
        background: ${p.$active ? "#0078d4" : "#7b7f8a"};
      }
    `}
`;

const ActiveTile = styled.span`
  display: grid;
  place-items: center;
  width: 38px;
  height: 39px;
  border-radius: 4px;
  background: #f3f6fb;
`;

const OrbCorner = styled.span`
  position: absolute;
  right: -5px;
  top: -5px;
`;

const TaskSearch = styled.button`
  display: flex;
  align-items: center;
  justify-content: center;
  gap: 5px;
  width: 98px;
  height: 30px;
  margin: 0 4px 0 5px;
  border-radius: 15px;
  background: #f5f8fc;
`;

const Tray = styled.div`
  display: flex;
  align-items: center;
  margin-left: auto;
  padding-right: 20px;
`;

const Clock = styled.button`
  width: 60px;
  margin-right: 5px;
  text-align: right;
  line-height: 16px;
`;

const Count = styled.span`
  width: 16px;
  height: 16px;
  border-radius: 50%;
  background: #0078d4;
  color: #fff;
  font-size: 10px;
  text-align: center;
`;

const AppDivider = styled.span`
  width: 1px;
  height: 24px;
  background: #8b93a5;
`;

const BraveProfile = ({ id }) => (
  <BadgeHolder><BraveLion size={24} /><OrbCorner><ProfileOrb size={17} id={id} /></OrbCorner></BadgeHolder>
);

const S = (props) => <svg width="24" height="24" viewBox="0 0 24 24" {...props} />;

const apps = [
  ["Task view", <S><defs><linearGradient id="tv" x1="0" y1="0" x2="0" y2="1"><stop offset="0" stopColor="#555" /><stop offset="1" stopColor="#222" /></linearGradient></defs><rect x="7" y="1" width="17" height="16" fill="#f4f4f4" /><rect x="1" y="7" width="17" height="16" fill="url(#tv)" /><rect x="7" y="7" width="11" height="10" fill="#aaa" /></S>],
  ["Chat", <S><path d="M12 1a11 11 0 1 1-5 20.800L1.500 23 2.500 17.500A11 11 0 0 1 12 1z" fill="#6463c8" /><path d="M12 1a11 11 0 0 1 10.600 8L2.500 17A11 11 0 0 1 12 1z" fill="#8a6bc4" opacity=".7" /><rect x="5.500" y="7.500" width="9" height="9" rx="1.500" fill="#fff" /><path d="m15.500 10.500 3.500-2.500v8l-3.500-2.500z" fill="#fff" /></S>],
  ["Explorer", <S><path d="M0 2.500A1.500 1.500 0 0 1 1.500 1H9l2 3.500H0z" fill="#d9960f" /><rect y="3.500" width="24" height="19" rx="1.500" fill="#fdc52c" /><path d="M4 22.500V17a1.500 1.500 0 0 1 1.500-1.500h13A1.500 1.500 0 0 1 20 17v5.500z" fill="#1478c8" /><path d="M7 18.500h10" stroke="#0d4f8f" strokeWidth="1.500" /></S>, true],
  ["Brave", <BraveLion size={24} />],
  ["Firefox", <S><circle cx="12" cy="13" r="11" fill="#ff7139" /><path d="M16 0c2 1.500 3 3 3.300 5C22.500 7.500 24 10.500 23 14.500 22 20 17.500 24 12 24 6 24 1.500 19.500 1 14 .8 10 2 7 3 3.500L5.500 6c2-1.500 5-1.500 7-1.500C13.500 3 14.500 1.500 16 0z" fill="#ffae2b" /><path d="M1 13C2 20 6.500 24 12 24c5.500 0 10-3.500 11-9-3 4-7 5.500-11 4.500-5-1-7-3.500-11-6.500z" fill="#f5345e" /><circle cx="12.500" cy="13" r="5" fill="#7542e5" /><path d="M5 9c2.500-1 5 .5 8 1l-2.500 2.800-4 .7C5 12 4.500 10.500 5 9z" fill="#ff7139" /></S>],
  ["Store", <S><path d="M7 6V2.500h10V6" fill="none" stroke="#35b5ef" strokeWidth="2" /><path d="M.5 6h23v15a3 3 0 0 1-3 3h-17a3 3 0 0 1-3-3z" fill="#17497f" /><path d="M7.500 10h4v4h-4z" fill="#f25022" /><path d="M12.500 10h4v4h-4z" fill="#7fba00" /><path d="M7.500 15h4v4h-4z" fill="#00a4ef" /><path d="M12.500 15h4v4h-4z" fill="#ffb900" /></S>],
  ["Chrome", <S><circle cx="12" cy="12" r="12" fill="#fbbc05" /><path d="M12 0a12 12 0 0 1 10.400 6H12L6.500 14 1.600 6A12 12 0 0 1 12 0z" fill="#d93a2f" /><path d="M1.600 6 7 15l5 3-3.500 5.500A12 12 0 0 1 1.600 6z" fill="#249a48" /><circle cx="12" cy="12" r="6" fill="#fff" /><circle cx="12" cy="12" r="4.600" fill="#2f72e4" /></S>, true],
  ["Notepad", <S><rect x="3" y="2" width="18" height="20" rx="1" fill="#57bfd9" /><path d="M3 21h18l-1 2.500H4z" fill="#9b5a2a" /><path d="M3 20.500h18" stroke="#fff" /><path d="M6 0v4M9 0v4M12 0v4M15 0v4M18 0v4" stroke="#24566c" strokeWidth="1.300" /><path d="M6 7.500h12M6 11.500h12M6 15.500h12" stroke="#17627c" strokeWidth="1.500" /></S>],
  ["Sticky Notes", <S><path d="M1 1h22v22H1z" fill="#3a3a3a" /><path d="M12 12h11L12 23z" fill="#ffd91a" /><path d="M23 12v11H12z" fill="#2a2a2a" /></S>],
  ["Edge", <S><defs><linearGradient id="eg" x1="0" y1="0" x2="1" y2=".4"><stop offset="0" stopColor="#1ba0e2" /><stop offset="1" stopColor="#5fd96b" /></linearGradient></defs><circle cx="12" cy="12" r="12" fill="#1577c8" /><path d="M0 11C1 4.500 6 0 12 0c7 0 12 5 12 10 0 3.500-2.500 5.500-5.500 5.500-3 0-4.500-1-4.500-2 0-.8 1-1 1-2.700C15 8.500 12.500 7 9.500 7 5 7 1.500 9 0 11z" fill="url(#eg)" /><path d="M8.500 12c-2 5 2 9.500 7 9.500 2.500 0 5-1 6.500-2.700A12 12 0 0 1 12 24C7 22.500 5.500 16 8.500 12z" fill="#0c4a94" /><path d="M10.500 12c1-2 4-2 4.500-.7 0 1.200-1 1.500-1 2.200 0 1 1.500 2 4.500 2 1.500 0 3-.5 4.500-1.500-1.500 3-5 4.500-8 4.200-4-.6-5.500-3.500-4.500-6.200z" fill="#dbe6f8" /></S>, true],
  ["Opera", <S><path fillRule="evenodd" d="M12 1a11 11 0 1 1 0 22 11 11 0 0 1 0-22zm0 3.500c-2.800 0-4.500 3.400-4.500 7.500s1.700 7.500 4.500 7.500 4.500-3.400 4.500-7.500-1.700-7.500-4.500-7.500z" fill="#e5142c" /><path d="M16 2c4 1.700 7 5.500 7 10s-3 8.300-7 10c-1.500.5-3.500 0-4-2.500 2.800 0 4.500-3.400 4.500-7.500S14.800 4.500 12 4.500c.5-2.500 2.500-3 4-2.500z" fill="#a70014" /></S>, true],
  ["Player", <S><rect x=".5" y=".5" width="23" height="23" rx="2" fill="#f8d013" /><circle cx="12" cy="9" r="6" fill="#fff" /><path d="m10 6 5 3-5 3z" fill="#f8b013" /><text x="12" y="21" textAnchor="middle" fontFamily="Liberation Sans, sans-serif" fontWeight="700" fontSize="6" fill="#222">Player</text></S>],
  ["Media Player", <S><defs><linearGradient id="mp" x1="0" y1="0" x2="0" y2="1"><stop offset="0" stopColor="#f28a3c" /><stop offset="1" stopColor="#8d5bd0" /></linearGradient></defs><circle cx="12" cy="12" r="12" fill="url(#mp)" /><circle cx="12" cy="12" r="10" fill="#2f2f33" /><path d="m9 6.500 8.500 5.500L9 17.500z" fill="#fff" /></S>, true],
  ["Telegram", <S><circle cx="12" cy="12" r="11" fill="#229fd9" /><path d="m4.500 12 13.500-5.500-2.300 11.500-4.700-3.500L9 17l-.5-4z" fill="#fff" /></S>],
  ["Brave profile 1", <BraveProfile id="orb1" />, true],
  ["Brave profile 2", <BraveProfile id="orb2" />, true],
  ["Photos", <S><defs><linearGradient id="ph" x1="0" y1="0" x2="1" y2="0"><stop offset="0" stopColor="#1d6fd6" /><stop offset="1" stopColor="#5149b5" /></linearGradient></defs><rect x="1" y="1" width="22" height="22" rx="2" fill="url(#ph)" /><path d="m1 19 9.500-9a2 2 0 0 1 3 0l9.500 9v2a2 2 0 0 1-2 2H3a2 2 0 0 1-2-2z" fill="#2db2f0" /><path d="M1.500 22 12 12l2 2-9 9H3a2 2 0 0 1-1.500-1z" fill="#5fd0fa" /><circle cx="17.500" cy="5.500" r="2" fill="#fff" /></S>, true],
];

function Taskbar() {
  return (
    <Bottom>
      <Weather>
        <svg width="24" height="24" viewBox="0 0 24 24"><path d="M.5 14C1 8 5 5 10 5s9.500 3 10 9c-1.500-1.200-3-1.200-4.500 0-1.500-1.200-3-1.200-5 0-1.800-1.200-3.500-1.200-5 0-1.500-1.200-3.500-1.200-5 0z" fill="#3f9be8" /><path d="M10.500 12v9c0 3-4.500 3-4.500.3" stroke="#777" strokeWidth="1.600" fill="none" /><path d="m13 1-1 2M17 1l-1 2M21 1l-1 2M19 5l-1 2M23 5l-1 2M22 9l-1 2" stroke="#4f9fe6" strokeWidth="1.600" strokeLinecap="round" /></svg>
        <span><b>23°C</b>Rain coming</span>
      </Weather>
      <Slot aria-label="Start"><S><path d="M.5 1h11v11H.5z" fill="#35b7f3" /><path d="M12.500 1h11v11h-11z" fill="#1c9ae8" /><path d="M.5 13h11v10.500H.5z" fill="#1590e2" /><path d="M12.500 13h11v10.500h-11z" fill="#0674cf" /></S></Slot>
      <TaskSearch><svg width="14" height="14" viewBox="0 0 14 14" fill="none" stroke="#222" strokeWidth="1.300"><circle cx="8.300" cy="5.700" r="4.800" /><path d="M4.800 9.200.8 13.200" /></svg>Search</TaskSearch>
      {apps.map(([name, icon, run]) => <Slot key={name} aria-label={name} $run={run}>{icon}</Slot>)}
      <AppDivider />
      <Slot aria-label="Brave, active window" $run $active><ActiveTile><BraveProfile id="orb3" /></ActiveTile></Slot>
      <Tray>
        <IconButton aria-label="Hidden icons"><ChevronUp size={18} strokeWidth={1.5} /></IconButton>
        <IconButton aria-label="OneDrive offline"><svg width="18" height="14" viewBox="0 0 18 14" fill="#aaa" stroke="#222" strokeWidth="1.200"><path d="M4.500 12a3.500 3.500 0 0 1-.5-7 5 5 0 0 1 9-.5A3.800 3.800 0 0 1 13.500 12z" /><path d="m2 1 14 12.500" /></svg></IconButton>
        <IconButton aria-label="Wi-Fi"><Wifi size={17} strokeWidth={1.6} /></IconButton>
        <IconButton $w={16} $h={32} aria-label="Volume"><Volume2 size={16} strokeWidth={1.3} /></IconButton>
        <IconButton $w={34} $h={32} aria-label="Battery"><svg width="17" height="14" viewBox="0 0 17 14" fill="none" stroke="#222" strokeWidth="1.300"><rect x="5" y="4" width="10" height="8" rx="1.500" /><path d="M7 6h6v4H7z" fill="#222" /><path d="M16.200 6.500v3M2 0v2M5 0v2M3.500 5v7H5" /><path d="M1.300 2h4.400v2.500H1.300z" fill="#222" /></svg></IconButton>
        <Clock>8:31 PM<br />4/3/2023</Clock>
        <Count>1</Count>
      </Tray>
    </Bottom>
  );
}

export default function App() {
  return (
    <>
      <Global />
      <Screen>
        <BrowserChrome />
        <Notice>
          Enable Desktop Notifications On This Computer
          <NoticeButton>Enable Now!</NoticeButton>
          <NoticeClose $w={16} $color="#222" aria-label="Dismiss"><X size={10} strokeWidth={4} /></NoticeClose>
        </Notice>
        <Workspace>
          <AppRail />
          <BoardSidebar />
          <Board />
        </Workspace>
        <Taskbar />
      </Screen>
    </>
  );
}
